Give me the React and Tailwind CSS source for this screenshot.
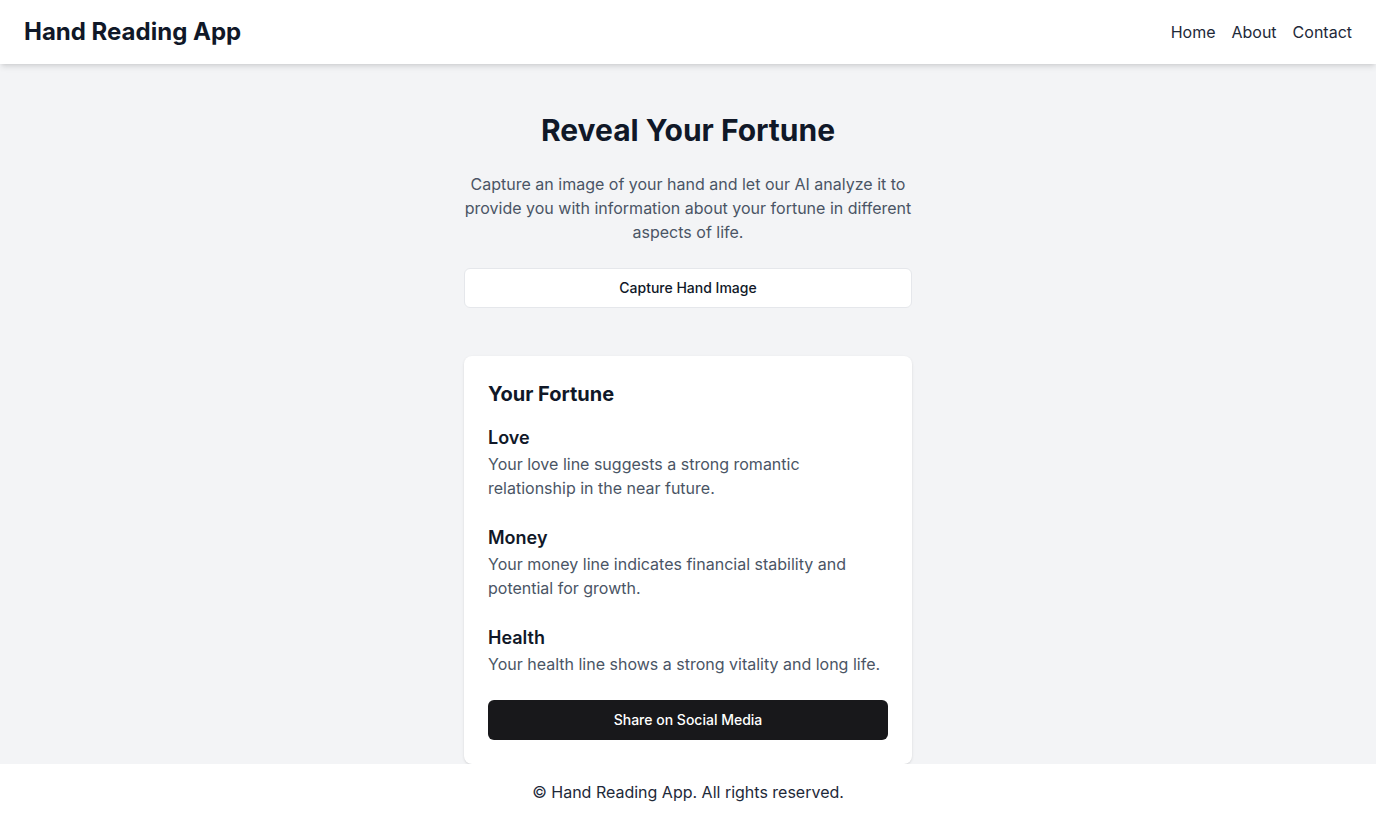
import React from 'react';

const fortunes = [
    { title: 'Love', text: 'Your love line suggests a strong romantic relationship in the near future.' },
    { title: 'Money', text: 'Your money line indicates financial stability and potential for growth.' },
    { title: 'Health', text: 'Your health line shows a strong vitality and long life.' },
];

export default function App() {
    return (
        <div className="min-h-screen flex flex-col bg-gray-100" style={{ fontFamily: 'Inter, "Noto Sans", sans-serif' }}>
            <header className="bg-white shadow-md h-16 px-6 flex items-center justify-between relative z-10">
                <h1 className="text-2xl font-bold text-gray-900">Hand Reading App</h1>
                <nav className="flex gap-4 text-base text-gray-800">
                    <a href="#">Home</a>
                    <a href="#">About</a>
                    <a href="#">Contact</a>
                </nav>
            </header>

            <main className="flex-1 pt-12 flex flex-col items-center">
                <div className="w-[448px] flex flex-col items-center">
                    <h2 className="text-3xl font-bold text-gray-900 mb-6">Reveal Your Fortune</h2>
                    <p className="text-base leading-6 text-gray-600 text-center mb-6">
                        Capture an image of your hand and let our AI analyze it to provide you with information about your fortune in different aspects of life.
                    </p>
                    <button className="w-full h-10 bg-white border border-gray-200 rounded-md text-sm font-medium text-gray-900">
                        Capture Hand Image
                    </button>

                    <div className="w-full mt-12 bg-white rounded-lg shadow-sm p-6">
                        <h3 className="text-xl font-bold text-gray-900 mb-4">Your Fortune</h3>
                        <div className="flex flex-col gap-6">
                            {fortunes.map((f) => (
                                <div key={f.title}>
                                    <h4 className="text-lg font-semibold text-gray-900">{f.title}</h4>
                                    <p className="text-base text-gray-600">{f.text}</p>
                                </div>
                            ))}
                            <button className="w-full h-10 bg-[#18181b] rounded-md text-sm font-medium text-white">
                                Share on Social Media
                            </button>
                        </div>
                    </div>
                </div>
            </main>

            <footer className="bg-white py-4 text-center text-base text-gray-800">
                © Hand Reading App. All rights reserved.
            </footer>
        </div>
    );
}
